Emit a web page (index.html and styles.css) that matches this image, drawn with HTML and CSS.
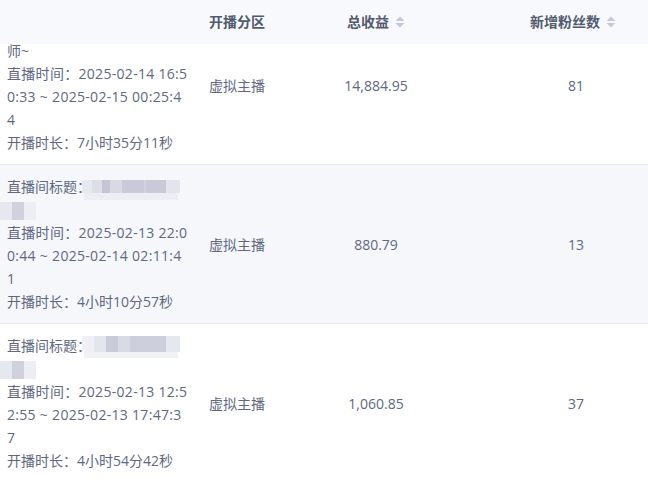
FILE: index.html
```html
<!DOCTYPE html>
<html lang="zh-CN">
<head>
<meta charset="utf-8">
<title>直播记录</title>
<link rel="stylesheet" href="styles.css">
</head>
<body>
<div class="scroller" id="scroller">
  <div class="table">
    <div class="thead">
      <div class="th th-info"></div>
      <div class="th th-zone">开播分区</div>
      <div class="th th-num">总收益<svg class="sort" viewBox="0 0 10 12" width="10" height="12"><path d="M5 0.5L9.5 5H0.5Z"/><path d="M0.5 7H9.5L5 11.5Z"/></svg></div>
      <div class="th th-num">新增粉丝数<svg class="sort" viewBox="0 0 10 12" width="10" height="12"><path d="M5 0.5L9.5 5H0.5Z"/><path d="M0.5 7H9.5L5 11.5Z"/></svg></div>
    </div>

    <div class="tr">
      <div class="td td-info">
        <div class="title">直播间标题：<span class="mosaic mosaic-d"></span>老师~</div>
        <div class="time">直播时间：2025-02-14 16:50:33 ~ 2025-02-15 00:25:44</div>
        <div class="dur">开播时长：7小时35分11秒</div>
      </div>
      <div class="td td-zone">虚拟主播</div>
      <div class="td td-num">14,884.95</div>
      <div class="td td-num">81</div>
    </div>

    <div class="tr tr-hover">
      <div class="td td-info">
        <div class="title">直播间标题：<span class="mosaic mosaic-a"></span><span class="mosaic mosaic-b"></span></div>
        <div class="time">直播时间：2025-02-13 22:00:44 ~ 2025-02-14 02:11:41</div>
        <div class="dur">开播时长：4小时10分57秒</div>
      </div>
      <div class="td td-zone">虚拟主播</div>
      <div class="td td-num">880.79</div>
      <div class="td td-num">13</div>
    </div>

    <div class="tr">
      <div class="td td-info">
        <div class="title">直播间标题：<span class="mosaic mosaic-c"></span><span class="mosaic mosaic-b"></span></div>
        <div class="time">直播时间：2025-02-13 12:52:55 ~ 2025-02-13 17:47:37</div>
        <div class="dur">开播时长：4小时54分42秒</div>
      </div>
      <div class="td td-zone">虚拟主播</div>
      <div class="td td-num">1,060.85</div>
      <div class="td td-num">37</div>
    </div>
  </div>
</div>
<script src="app.js"></script>
</body>
</html>
```

FILE: styles.css
```css
html, body {
  margin: 0;
  padding: 0;
  background: #ffffff;
}

body {
  font-family: "Open Sans", "Noto Sans CJK SC", sans-serif;
  font-size: 14px;
  color: #606880;
}

.scroller {
  width: 648px;
  height: 480px;
  overflow: hidden;
}

.table {
  width: 700px;
}

.thead,
.tr {
  display: grid;
  grid-template-columns: 200px 100px 152px 248px;
}

.thead {
  position: sticky;
  top: 0;
  z-index: 2;
  height: 44px;
  background: #f8f9fc;
  font-weight: 700;
  color: #515a6e;
}

.th {
  display: flex;
  align-items: center;
  line-height: 20px;
}

.th-zone {
  padding-left: 9px;
}

.th-num {
  justify-content: center;
  gap: 6px;
}

.th-num:last-child {
  padding-right: 6px;
}

.sort {
  fill: #c5c8d9;
  display: block;
}

.tr {
  border-bottom: 1px solid #eaecf2;
  background: #ffffff;
}

.tr-hover {
  background: #f5f7fb;
}

.td {
  display: flex;
  align-items: center;
}

.td-info {
  display: block;
  padding: 10px 0 10px 7px;
  line-height: 23px;
}

.title,
.time,
.dur {
  width: 181.7px;
  word-break: break-all;
}

.time {
  letter-spacing: 0.3px;
}

.td-zone {
  padding-left: 9px;
}

.td-num {
  justify-content: center;
}

.mosaic {
  display: inline-block;
  vertical-align: middle;
  filter: blur(0.6px);
}

.mosaic-a,
.mosaic-c,
.mosaic-d {
  margin-left: -9px;
}

.mosaic-a {
  width: 98px;
  height: 13px;
  margin-top: -4px;
  background: linear-gradient(90deg,
    #e7e9f0 0 10px,
    #dcdee8 10px 20px,
    #c4c6d5 20px 28px,
    #d7d9e3 28px 40px,
    #c8cad9 40px 62px,
    #d0d2de 62px 64px,
    #c8cad9 64px 84px,
    #e3e5ed 84px 98px);
  box-shadow: 0 9px 0 -2px #eceef4;
}

.mosaic-c {
  width: 98px;
  height: 16px;
  margin-top: -6px;
  background: linear-gradient(90deg,
    #eff0f5 0 12px,
    #e4e6ee 12px 24px,
    #c9cbd9 24px 36px,
    #d8dae4 36px 48px,
    #cdcfdc 48px 84px,
    #e6e8ef 84px 98px);
  box-shadow: 0 8px 0 -2px #f1f2f6;
}

.mosaic-d {
  width: 84px;
  height: 13px;
  background: linear-gradient(90deg, #e4e6ee 0 20px, #cbcdda 20px 70px, #e4e6ee 70px 84px);
}

.mosaic-b {
  width: 36px;
  height: 18px;
  margin-left: -7px;
  background: linear-gradient(90deg,
    #e6e8ef 0 12px,
    #cfd1dd 12px 24px,
    #eceef3 24px 36px);
}
```

FILE: app.js
```js
document.getElementById('scroller').scrollTop = 38;
```
